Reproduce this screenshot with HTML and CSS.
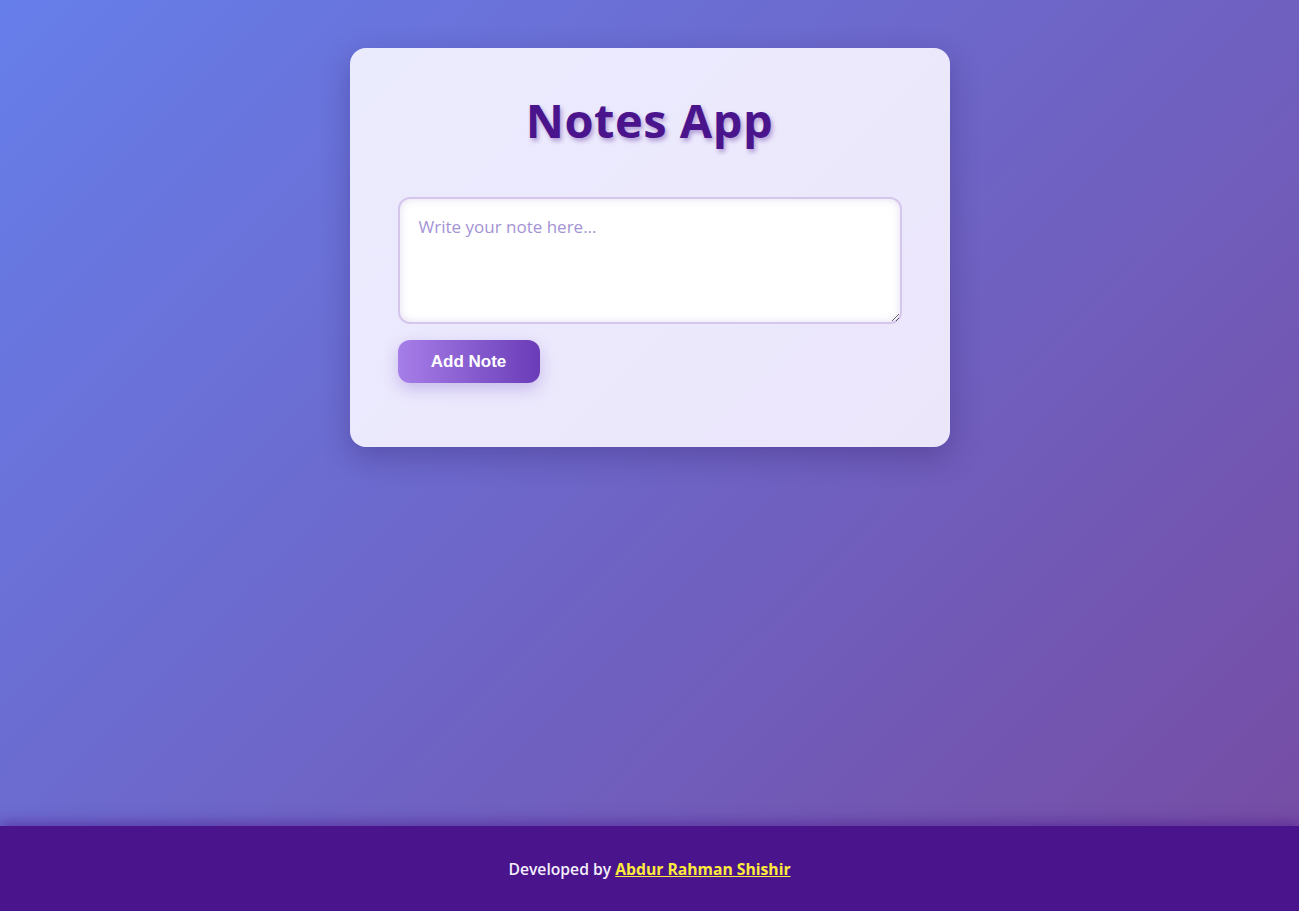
FILE: index.html
```html
<!DOCTYPE html>
<html lang="en">
<head>
<meta charset="UTF-8">
<title>Notes App</title>
<link rel="stylesheet" href="styles.css">
</head>
<body>
<main class="page">
  <section class="card">
    <h1 class="title">Notes App</h1>
    <textarea class="note-input" placeholder="Write your note here..."></textarea>
    <button class="add-btn">Add Note</button>
  </section>
</main>
<footer class="footer">
  <p class="footer-text">Developed by <a class="footer-link" href="#">Abdur Rahman Shishir</a></p>
</footer>
</body>
</html>
```
FILE: styles.css
```css
* { box-sizing: border-box; }
html, body { margin: 0; padding: 0; }
body {
  min-height: 100vh;
  display: flex;
  flex-direction: column;
  font-family: "Open Sans", "Noto Sans", sans-serif;
  background: linear-gradient(135deg, #667eea 0%, #764ba2 100%);
}
.page {
  flex: 1;
  display: flex;
  justify-content: center;
  align-items: flex-start;
  padding-top: 48px;
}
.card {
  width: 600px;
  height: 399px;
  background: linear-gradient(135deg, #ebebfe 0%, #ece6fb 100%);
  border-radius: 16px;
  padding: 48px 48px;
  display: flex;
  flex-direction: column;
  align-items: flex-start;
  box-shadow: 0 10px 30px rgba(40, 20, 90, 0.3);
}
.title {
  align-self: stretch;
  margin: 0 0 53px;
  text-align: center;
  font-size: 47px;
  line-height: 48px;
  font-weight: 700;
  letter-spacing: 0.5px;
  color: #4a148c;
  text-shadow: 2px 3px 4px rgba(74, 20, 140, 0.35);
}
.note-input {
  width: 100%;
  height: 127px;
  border: 2px solid #d4c6ec;
  border-radius: 12px;
  background: #fff;
  padding: 16px 19px;
  font-family: "Open Sans", "Noto Sans", sans-serif;
  font-size: 17px;
  color: #333;
  box-shadow: inset 0 0 8px rgba(120, 90, 180, 0.2);
  resize: vertical;
  outline: none;
}
.note-input::placeholder { color: #a493d4; }
.add-btn {
  margin-top: 16px;
  width: 142px;
  height: 43px;
  border: none;
  border-radius: 12px;
  background: linear-gradient(90deg, #a67ee8 0%, #6a3cb8 100%);
  color: #fff;
  font-family: "Liberation Sans", Arial, sans-serif;
  font-weight: 700;
  font-size: 17px;
  box-shadow: 0 6px 16px rgba(120, 80, 200, 0.3);
  cursor: pointer;
}
.footer {
  height: 85px;
  background: #4a148c;
  display: flex;
  align-items: center;
  justify-content: center;
  box-shadow: 0 -4px 12px rgba(74, 20, 140, 0.5);
}
.footer-text {
  margin: 0;
  font-size: 15.7px;
  font-weight: 600;
  color: #f3eefb;
}
.footer-link {
  color: #ffeb3b;
  font-weight: 700;
  text-decoration: underline;
}
```
